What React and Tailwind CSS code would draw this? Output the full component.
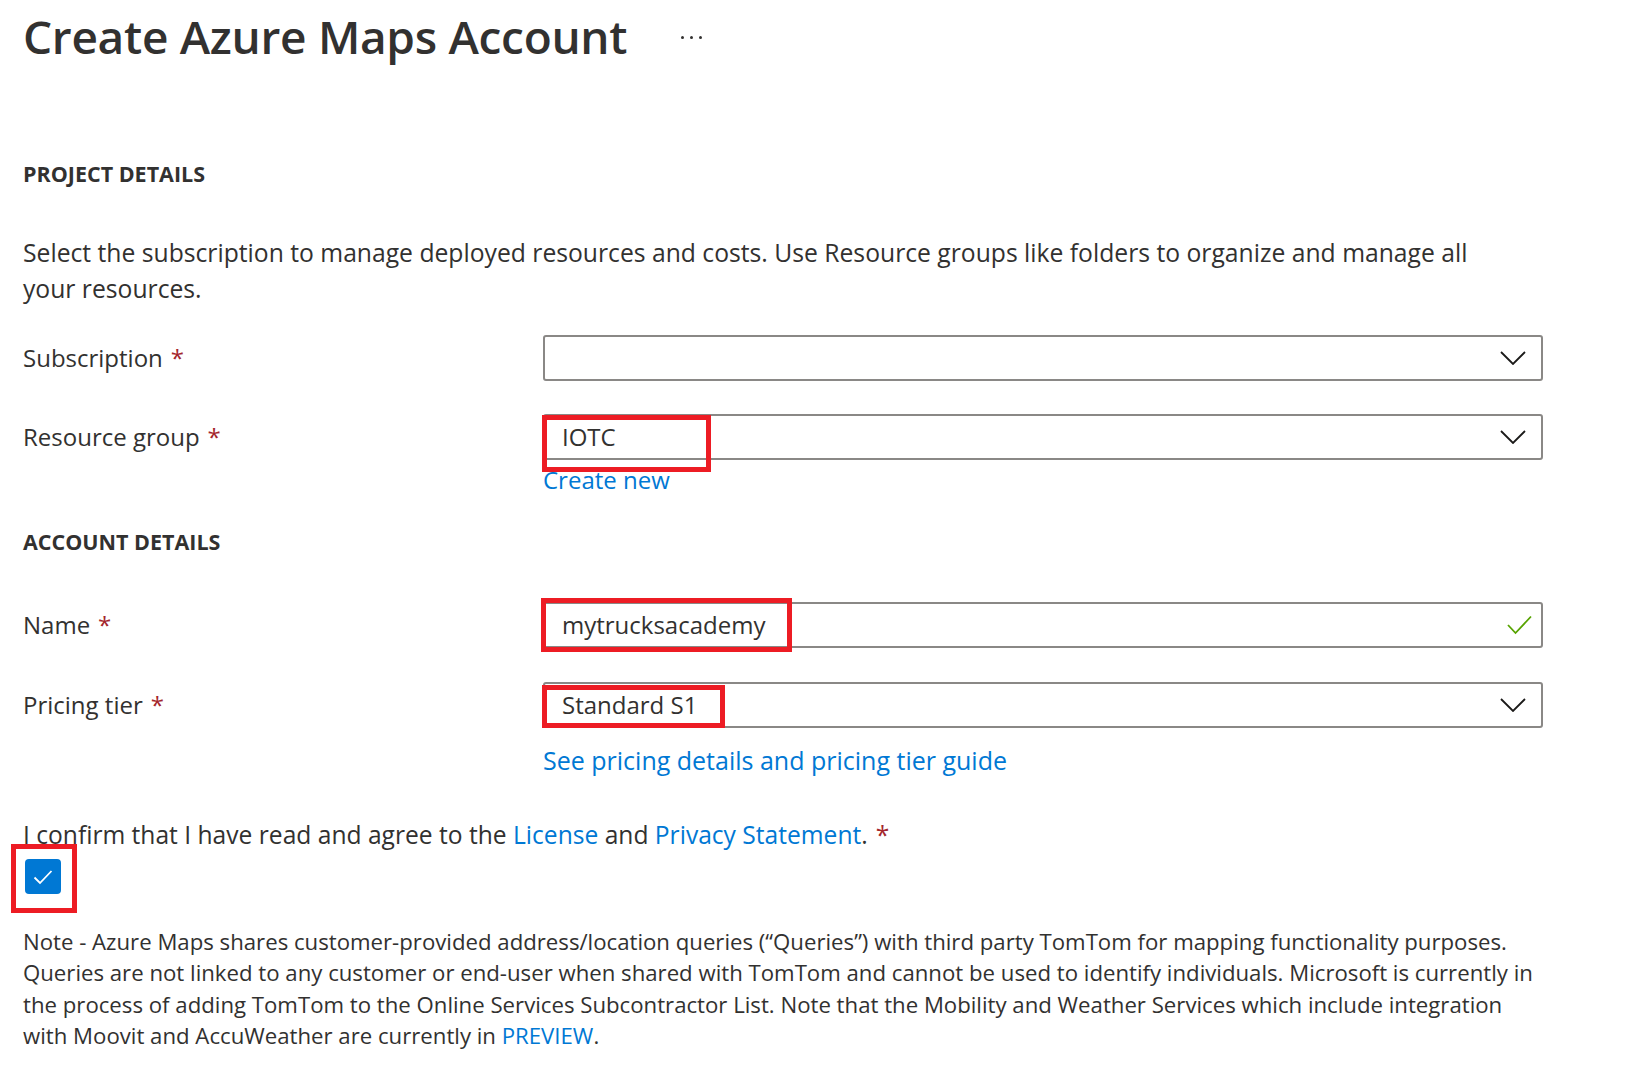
import React from "react";

function Chevron() {
  return (
    <svg width="26" height="14" viewBox="0 0 26 14" fill="none" className="shrink-0">
      <path d="M1 1 L13 13 L25 1" stroke="#1b1a19" strokeWidth="1.8" strokeLinejoin="miter" />
    </svg>
  );
}

function Required() {
  return <span className="text-[#a4262c] ml-2">*</span>;
}

function Field({ value, icon, children }) {
  return (
    <div className="relative h-[46px] w-[1000px] border-2 border-[#8a8886] rounded-[3px] flex items-center justify-between pl-[17px] pr-[15px]">
      <span className="text-[#323130]">{value}</span>
      {icon}
      {children}
    </div>
  );
}

function Label({ text }) {
  return (
    <div className="w-[520px] text-[#323130]">
      {text}
      <Required />
    </div>
  );
}

export default function App() {
  return (
    <div className="bg-white min-h-[1092px] pl-[23px] font-['Open_Sans',sans-serif] text-[#323130] text-[24px] leading-[28px]">
      <div className="h-[76px] flex items-center pb-[4px]">
        <h1 className="text-[46px] font-semibold leading-none tracking-[-0.3px]">Create Azure Maps Account</h1>
        <div className="flex gap-[6px] ml-[54px] mt-[2px]">
          <span className="w-[3px] h-[3px] rounded-full bg-[#323130]" />
          <span className="w-[3px] h-[3px] rounded-full bg-[#323130]" />
          <span className="w-[3px] h-[3px] rounded-full bg-[#323130]" />
        </div>
      </div>

      <h2 className="mt-[84px] h-[28px] flex items-center text-[21.5px] font-bold">PROJECT DETAILS</h2>

      <p className="mt-[47px] text-[24.7px] leading-[36px] whitespace-nowrap">
        Select the subscription to manage deployed resources and costs. Use Resource groups like folders to organize and manage all
        <br />
        your resources.
      </p>

      <div className="mt-[28px] flex items-center">
        <Label text="Subscription" />
        <Field value="" icon={<Chevron />} />
      </div>

      <div className="mt-[33px] flex items-center">
        <Label text="Resource group" />
        <Field value="IOTC" icon={<Chevron />}>
          <div className="absolute left-[-3px] top-[-1px] w-[169px] h-[57px] border-[5px] border-[#ed1c24]" />
        </Field>
      </div>
      <div className="ml-[520px] mt-[6px]">
        <a className="text-[#0078d4]">Create new</a>
      </div>

      <h2 className="mt-[34px] h-[28px] flex items-center text-[21.5px] font-bold">ACCOUNT DETAILS</h2>

      <div className="mt-[46px] flex items-center">
        <Label text="Name" />
        <Field
          value="mytrucksacademy"
          icon={
            <svg width="25" height="20" viewBox="0 0 25 20" fill="none" className="mr-[-6px]">
              <path d="M1 10 L8.5 18 L24 1.5" stroke="#57a300" strokeWidth="1.8" />
            </svg>
          }
        >
          <div className="absolute left-[-4px] top-[-6px] w-[251px] h-[54px] border-[5px] border-[#ed1c24]" />
        </Field>
      </div>

      <div className="mt-[34px] flex items-center">
        <Label text="Pricing tier" />
        <Field value="Standard S1" icon={<Chevron />}>
          <div className="absolute left-[-3px] top-[1px] w-[183px] h-[43px] border-[5px] border-[#ed1c24]" />
        </Field>
      </div>
      <div className="ml-[520px] mt-[18px] text-[25px]">
        <a className="text-[#0078d4]">See pricing details and pricing tier guide</a>
      </div>

      <p className="mt-[47px] text-[24.6px]">
        I confirm that I have read and agree to the <a className="text-[#0078d4]">License</a> and{" "}
        <a className="text-[#0078d4]">Privacy Statement</a>.
        <Required />
      </p>

      <div className="relative mt-[10px] w-[36px] h-[35px] ml-[2px]">
        <div className="w-[36px] h-[35px] rounded-[4px] bg-[#0078d4] flex items-center justify-center">
          <svg width="20" height="16" viewBox="0 0 20 16" fill="none">
            <path d="M1.5 8.5 L7 14 L18.5 2" stroke="white" strokeWidth="1.8" />
          </svg>
        </div>
        <div className="absolute left-[-14px] top-[-15px] w-[66px] h-[69px] border-[5px] border-[#ed1c24]" />
      </div>

      <p className="mt-[32px] text-[22.2px] leading-[31.3px] whitespace-nowrap">
        Note - Azure Maps shares customer-provided address/location queries (“Queries”) with third party TomTom for mapping functionality purposes.
        <br />
        Queries are not linked to any customer or end-user when shared with TomTom and cannot be used to identify individuals. Microsoft is currently in
        <br />
        the process of adding TomTom to the Online Services Subcontractor List. Note that the Mobility and Weather Services which include integration
        <br />
        with Moovit and AccuWeather are currently in <a className="text-[#0078d4]">PREVIEW</a>.
      </p>
    </div>
  );
}
